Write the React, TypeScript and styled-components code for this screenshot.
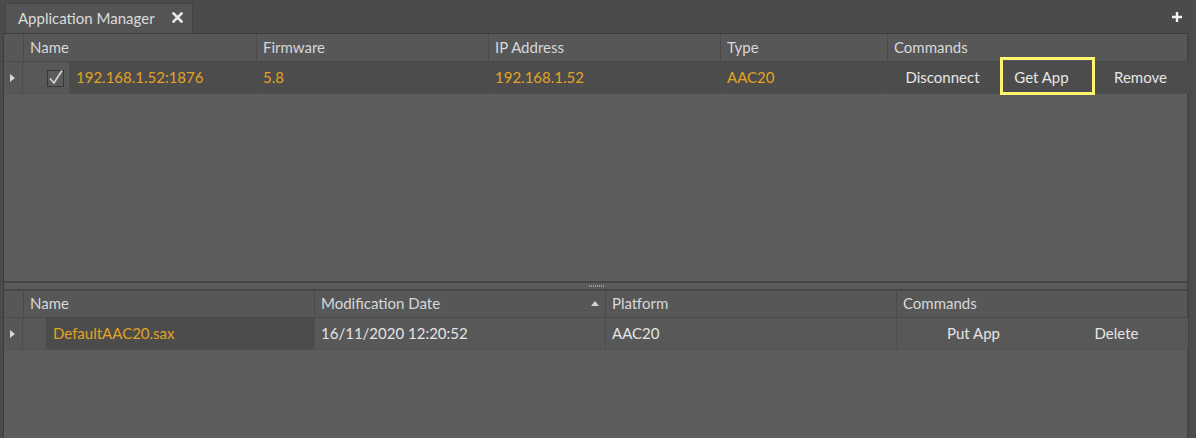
import React from "react";
import styled, { createGlobalStyle } from "styled-components";

const GlobalStyle = createGlobalStyle`
  html, body { margin: 0; padding: 0; }
  body {
    background: #4b4b4b;
    font-family: "Lato", "Open Sans", "Liberation Sans", sans-serif;
    font-size: 15px;
    overflow: hidden;
  }
`;

const Window = styled.div`
  width: 1196px;
  height: 438px;
  display: flex;
  flex-direction: column;
  background: #4b4b4b;
`;

const TabStrip = styled.div`
  height: 33px;
  display: flex;
  align-items: flex-end;
  justify-content: space-between;
  padding: 0 14px 0 5px;
  box-sizing: border-box;
  flex: none;
`;

const Tab = styled.div`
  width: 188px;
  height: 30px;
  box-sizing: border-box;
  display: flex;
  align-items: center;
  justify-content: space-between;
  padding: 0 9px 2px 12px;
  background: #545454;
  border: 1px solid #444;
  border-bottom: none;
  color: #dcdcdc;
  font-size: 15px;
`;

const PlusBox = styled.div`
  align-self: center;
  display: flex;
`;

const Panel = styled.div`
  flex: 1;
  margin: 0 7px 0 3px;
  border-left: 1px solid #3d3d3d;
  border-right: 2px solid #434343;
  border-top: 1px solid #3d3d3d;
  display: flex;
  flex-direction: column;
  background: #5d5d5d;
  min-height: 0;
`;

const GridSection = styled.div<{ $h?: number }>`
  ${(p) => (p.$h ? `height: ${p.$h}px; flex: none;` : "flex: 1;")}
  display: flex;
  flex-direction: column;
  background: #5d5d5d;
`;

const GridRow = styled.div<{ $cols: string; $h: number }>`
  display: grid;
  grid-template-columns: ${(p) => p.$cols};
  height: ${(p) => p.$h}px;
  box-sizing: border-box;
`;

const HeaderRow = styled(GridRow)`
  background: #575757;
  border-bottom: 1px solid #4a4a4a;
`;

const DataRow = styled(GridRow)`
  border-bottom: 1px solid #525252;
`;

const HeaderCell = styled.div`
  display: flex;
  align-items: center;
  padding: 0 0 2px 6px;
  color: #d6d8da;
  font-size: 15px;
  border-left: 1px solid #4a4a4a;
  position: relative;
  white-space: nowrap;
  &:first-child { border-left: none; }
`;

const RowHeadCell = styled.div`
  display: flex;
  align-items: center;
  justify-content: center;
  padding-right: 2px;
  background: #575757;
  border-right: 1px solid #4a4a4a;
`;

const Cell = styled.div<{ $dark?: boolean; $accent?: boolean }>`
  display: flex;
  align-items: center;
  padding: 0 0 2px 6px;
  background: ${(p) => (p.$dark ? "#4c4c4c" : "#585858")};
  color: ${(p) => (p.$accent ? "#e3a322" : "#e4e4e4")};
  border-left: 1px solid #4e4e4e;
  font-size: 15px;
  white-space: nowrap;
  &:nth-child(2) { border-left: none; }
`;

const NameCell = styled.div<{ $lead: number }>`
  display: grid;
  grid-template-columns: ${(p) => p.$lead}px 1fr;
  background: #585858;
`;

const CheckZone = styled.div`
  display: flex;
  align-items: center;
  justify-content: flex-end;
  padding-right: 5px;
`;

const NameText = styled.div`
  display: flex;
  align-items: center;
  padding: 0 0 2px 7px;
  background: #4c4c4c;
  color: #e3a322;
  font-size: 15px;
  white-space: nowrap;
`;

const CommandCell = styled.div<{ $n: number; $w: number; $pad: number; $dark?: boolean }>`
  display: grid;
  grid-template-columns: repeat(${(p) => p.$n}, ${(p) => p.$w}px);
  padding-left: ${(p) => p.$pad}px;
  background: ${(p) => (p.$dark ? "#4c4c4c" : "#585858")};
  border-left: 1px solid #4e4e4e;
`;

const CommandButton = styled.div`
  display: flex;
  align-items: center;
  justify-content: center;
  padding-bottom: 2px;
  color: #e6e6e6;
  font-size: 15px;
  position: relative;
  white-space: nowrap;
`;

const Highlight = styled.div`
  position: absolute;
  left: 8px;
  top: -5px;
  width: 95px;
  height: 38px;
  box-sizing: border-box;
  border: 3px solid #fdf56b;
  pointer-events: none;
`;

const SortArrow = styled.span`
  position: absolute;
  right: 6px;
  top: 10px;
  width: 0;
  height: 0;
  border-left: 4px solid transparent;
  border-right: 4px solid transparent;
  border-bottom: 5px solid #d2d2d2;
`;

const Splitter = styled.div`
  height: 10px;
  flex: none;
  box-sizing: border-box;
  border-top: 2px solid #454545;
  border-bottom: 2px solid #474747;
  background: #5a5a5a;
  display: flex;
  align-items: center;
  justify-content: center;
`;

const Grip = styled.div`
  width: 16px;
  height: 2px;
  margin-left: 2px;
  background: repeating-linear-gradient(90deg, #9a9a9a 0 1px, transparent 1px 2px);
`;

const Arrow = () => (
  <svg width="5" height="8" viewBox="0 0 5 8">
    <path d="M0 0 L5 4 L0 8 Z" fill="#d8d8d8" />
  </svg>
);

const CheckBox = () => (
  <svg width="17" height="18" viewBox="0 0 17 18">
    <rect x="0.5" y="1.5" width="16" height="16" fill="#5c5c5c" stroke="#383838" />
    <path d="M3 9.5 L7 14 L15 1.5" fill="none" stroke="#d9d9d9" strokeWidth="1.6" />
  </svg>
);

const CloseIcon = () => (
  <svg width="11" height="11" viewBox="0 0 11 11">
    <path d="M1.5 1.5 L9.5 9.5 M9.5 1.5 L1.5 9.5" stroke="#e8e8e8" strokeWidth="2.6" strokeLinecap="square" />
  </svg>
);

const PlusIcon = () => (
  <svg width="10" height="10" viewBox="0 0 10 10">
    <path d="M5 0 V10 M0 5 H10" stroke="#f2f2f2" strokeWidth="2.4" />
  </svg>
);

const upperCols = "19px 233px 232px 232px 167px 1fr";
const lowerCols = "19px 291px 291px 291px 1fr";

export default function App() {
  return (
    <Window>
      <GlobalStyle />
      <TabStrip>
        <Tab>
          <span>Application Manager</span>
          <CloseIcon />
        </Tab>
        <PlusBox>
          <PlusIcon />
        </PlusBox>
      </TabStrip>
      <Panel>
        <GridSection $h={247}>
          <HeaderRow $cols={upperCols} $h={28}>
            <HeaderCell />
            <HeaderCell>Name</HeaderCell>
            <HeaderCell>Firmware</HeaderCell>
            <HeaderCell>IP Address</HeaderCell>
            <HeaderCell>Type</HeaderCell>
            <HeaderCell>Commands</HeaderCell>
          </HeaderRow>
          <DataRow $cols={upperCols} $h={32}>
            <RowHeadCell>
              <Arrow />
            </RowHeadCell>
            <NameCell $lead={46}>
              <CheckZone>
                <CheckBox />
              </CheckZone>
              <NameText>192.168.1.52:1876</NameText>
            </NameCell>
            <Cell $dark $accent>5.8</Cell>
            <Cell $dark $accent>192.168.1.52</Cell>
            <Cell $dark $accent>AAC20</Cell>
            <CommandCell $n={3} $w={99} $pad={5} $dark>
              <CommandButton>Disconnect</CommandButton>
              <CommandButton>
                Get App
                <Highlight />
              </CommandButton>
              <CommandButton>Remove</CommandButton>
            </CommandCell>
          </DataRow>
        </GridSection>
        <Splitter>
          <Grip />
        </Splitter>
        <GridSection>
          <HeaderRow $cols={lowerCols} $h={27}>
            <HeaderCell />
            <HeaderCell>Name</HeaderCell>
            <HeaderCell>
              Modification Date
              <SortArrow />
            </HeaderCell>
            <HeaderCell>Platform</HeaderCell>
            <HeaderCell>Commands</HeaderCell>
          </HeaderRow>
          <DataRow $cols={lowerCols} $h={32}>
            <RowHeadCell>
              <Arrow />
            </RowHeadCell>
            <NameCell $lead={23}>
              <CheckZone />
              <NameText>DefaultAAC20.sax</NameText>
            </NameCell>
            <Cell>16/11/2020 12:20:52</Cell>
            <Cell>AAC20</Cell>
            <CommandCell $n={2} $w={143} $pad={5}>
              <CommandButton>Put App</CommandButton>
              <CommandButton>Delete</CommandButton>
            </CommandCell>
          </DataRow>
        </GridSection>
      </Panel>
    </Window>
  );
}
